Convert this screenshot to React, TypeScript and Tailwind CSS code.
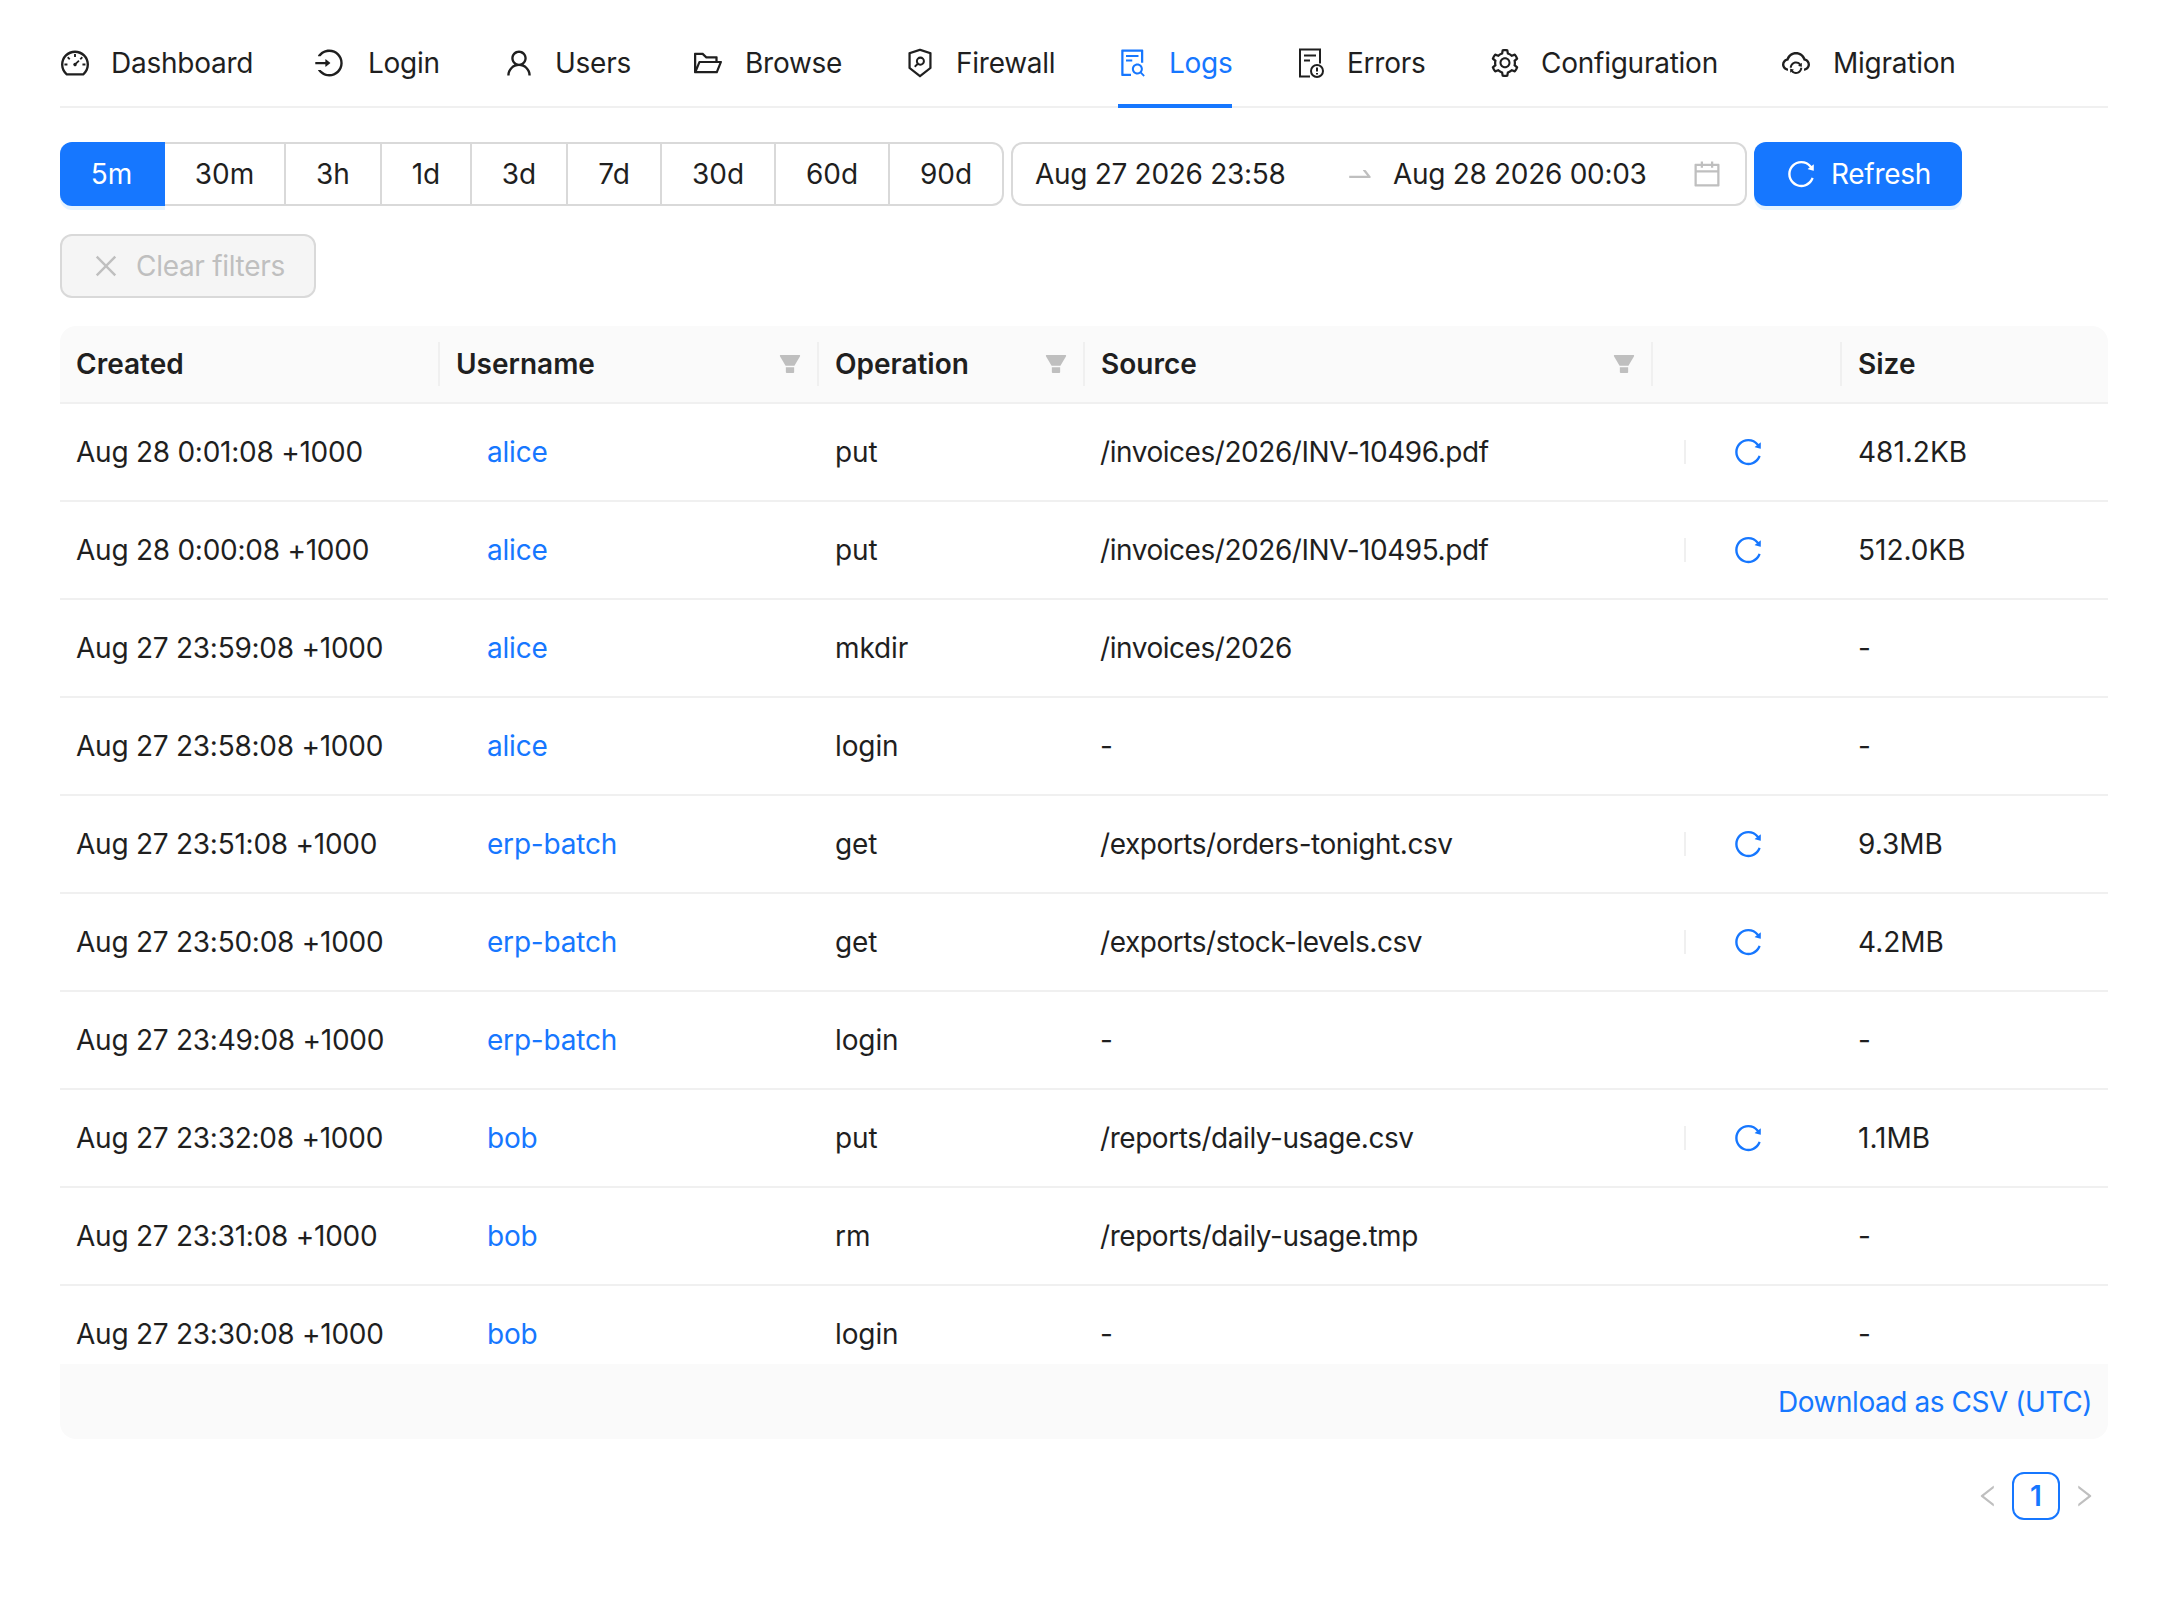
import {
  AiFillFilter,
  AiOutlineCalendar,
  AiOutlineClose,
  AiOutlineCloudSync,
  AiOutlineDashboard,
  AiOutlineFileSearch,
  AiOutlineFolderOpen,
  AiOutlineLeft,
  AiOutlineLogin,
  AiOutlineReload,
  AiOutlineRight,
  AiOutlineSecurityScan,
  AiOutlineSetting,
  AiOutlineSwapRight,
  AiOutlineUser,
} from "react-icons/ai";

const sans = "[font-family:Inter,'Liberation_Sans',sans-serif]";

const ErrorsIcon = () => (
  <svg width="32" height="32" viewBox="0 0 32 32" fill="none" stroke="currentColor" strokeWidth="2" className="shrink-0">
    <path d="M15 29.500H5V2.500h20v14" />
    <path d="M9 8.500h12M9 13.500h6" />
    <circle cx="22" cy="24" r="6" />
    <path d="M22 20.500v4M22 26v1.500" />
  </svg>
);

const tabs = [
  { label: "Dashboard", icon: <AiOutlineDashboard size={32} className="shrink-0" />, w: "w-[190px]", gap: "gap-[20px]" },
  { label: "Login", icon: <AiOutlineLogin size={32} className="shrink-0" />, w: "w-[126px]", gap: "gap-[23px]" },
  { label: "Users", icon: <AiOutlineUser size={32} className="shrink-0" />, w: "w-[125px]", gap: "gap-[20px]" },
  { label: "Browse", icon: <AiOutlineFolderOpen size={32} className="shrink-0" />, w: "w-[148px]", gap: "gap-[21px]" },
  { label: "Firewall", icon: <AiOutlineSecurityScan size={32} className="shrink-0" />, w: "w-[149px]", gap: "gap-[20px]" },
  { label: "Logs", icon: <AiOutlineFileSearch size={32} className="shrink-0" />, w: "w-[114px]", gap: "gap-[20px]", active: true },
  { label: "Errors", icon: <ErrorsIcon />, w: "w-[130px]", gap: "gap-[20px]" },
  { label: "Configuration", icon: <AiOutlineSetting size={32} className="shrink-0" />, w: "w-[227px]", gap: "gap-[20px]" },
  { label: "Migration", icon: <AiOutlineCloudSync size={32} className="shrink-0" />, w: "w-[174px]", gap: "gap-[21px]" },
];

const ranges = [
  { label: "5m", w: "w-[105px]", active: true },
  { label: "30m", w: "w-[121px]" },
  { label: "3h", w: "w-[96px]" },
  { label: "1d", w: "w-[90px]" },
  { label: "3d", w: "w-[96px]" },
  { label: "7d", w: "w-[94px]" },
  { label: "30d", w: "w-[114px]" },
  { label: "60d", w: "w-[114px]" },
  { label: "90d", w: "w-[114px]" },
];

const rows = [
  ["Aug 28 0:01:08 +1000", "alice", "put", "/invoices/2026/INV-10496.pdf", true, "481.2KB"],
  ["Aug 28 0:00:08 +1000", "alice", "put", "/invoices/2026/INV-10495.pdf", true, "512.0KB"],
  ["Aug 27 23:59:08 +1000", "alice", "mkdir", "/invoices/2026", false, "-"],
  ["Aug 27 23:58:08 +1000", "alice", "login", "-", false, "-"],
  ["Aug 27 23:51:08 +1000", "erp-batch", "get", "/exports/orders-tonight.csv", true, "9.3MB"],
  ["Aug 27 23:50:08 +1000", "erp-batch", "get", "/exports/stock-levels.csv", true, "4.2MB"],
  ["Aug 27 23:49:08 +1000", "erp-batch", "login", "-", false, "-"],
  ["Aug 27 23:32:08 +1000", "bob", "put", "/reports/daily-usage.csv", true, "1.1MB"],
  ["Aug 27 23:31:08 +1000", "bob", "rm", "/reports/daily-usage.tmp", false, "-"],
  ["Aug 27 23:30:08 +1000", "bob", "login", "-", false, "-"],
] as const;

export default function App() {
  return (
    <div className={`${sans} min-h-[1612px] bg-white px-[60px] text-[28px] leading-[40px] text-[#1f1f1f]`}>
      {/* top tabs */}
      <div className="flex h-[108px] gap-[64px] border-b-2 border-[#f0f0f0]">
        {tabs.map((t) => (
          <div
            key={t.label}
            className={`flex h-[108px] flex-none items-center whitespace-nowrap pt-[22px] tracking-[-0.25px] ${t.gap} ${t.w} ${
              t.active ? "border-b-4 border-[#1677ff] text-[#1677ff]" : "pb-[4px]"
            }`}
          >
            <span className="-ml-px">{t.icon}</span>
            <span>{t.label}</span>
          </div>
        ))}
      </div>

      {/* range picker row */}
      <div className="mt-[34px] flex gap-[7px]">
        <div className="flex">
          {ranges.map((r, i) => (
            <div
              key={r.label}
              className={`flex h-16 items-center justify-center border-y-2 border-r-2 ${r.w} ${
                r.active
                  ? "rounded-l-xl border-[#1677ff] bg-[#1677ff] text-white shadow-[0_4px_0_rgba(5,145,255,0.1)]"
                  : "border-[#d9d9d9]"
              } ${i === ranges.length - 1 ? "rounded-r-xl" : ""}`}
            >
              {r.label}
            </div>
          ))}
        </div>
        <div className="flex h-16 w-[736px] items-center rounded-xl border-2 border-[#d9d9d9] px-[22px] tracking-[-0.3px]">
          <span className="w-[310px]">Aug 27 2026 23:58</span>
          <span className="w-[48px] text-[#bfbfbf]">
            <AiOutlineSwapRight size={30} />
          </span>
          <span className="flex-1">Aug 28 2026 00:03</span>
          <AiOutlineCalendar size={32} className="text-[#bfbfbf]" />
        </div>
        <div className="flex h-16 w-[208px] items-center justify-center gap-[14px] rounded-xl bg-[#1677ff] tracking-[-0.3px] text-white shadow-[0_4px_0_rgba(5,145,255,0.1)]">
          <AiOutlineReload size={32} />
          <span>Refresh</span>
        </div>
      </div>

      {/* clear filters */}
      <div className="mt-7 flex h-16 w-[256px] items-center justify-center gap-[15px] rounded-xl border-2 border-[#d9d9d9] bg-[#f5f5f5] tracking-[-0.3px] text-[#bfbfbf]">
        <AiOutlineClose size={30} />
        <span>Clear filters</span>
      </div>

      {/* table */}
      <div className="mt-7 w-[2048px]">
        <div className="flex h-[78px] items-center rounded-t-2xl border-b-2 border-[#f0f0f0] bg-[#fafafa] font-semibold">
          <div className="w-[378px] pl-4">Created</div>
          <div className="flex h-[44px] w-[379px] items-center justify-between border-l-2 border-[#f0f0f0] pl-4 pr-[14px]">
            <span>Username</span>
            <AiFillFilter size={26} className="text-[#bfbfbf]" />
          </div>
          <div className="flex h-[44px] w-[266px] items-center justify-between border-l-2 border-[#f0f0f0] pl-4 pr-[14px]">
            <span>Operation</span>
            <AiFillFilter size={26} className="text-[#bfbfbf]" />
          </div>
          <div className="flex h-[44px] w-[568px] items-center justify-between border-l-2 border-[#f0f0f0] pl-4 pr-[14px]">
            <span>Source</span>
            <AiFillFilter size={26} className="text-[#bfbfbf]" />
          </div>
          <div className="h-[44px] w-[189px] border-l-2 border-[#f0f0f0]" />
          <div className="flex h-[44px] flex-1 items-center border-l-2 border-[#f0f0f0] px-4">Size</div>
        </div>

        {rows.map((r, i) => (
          <div
            key={r[0]}
            className={`flex ${
              i === rows.length - 1 ? "h-[78px] items-start pt-[28px]" : "h-[98px] items-center border-b-2 border-[#f0f0f0]"
            }`}
          >
            <div className="w-[378px] pl-4 tracking-[-0.25px]">{r[0]}</div>
            <div className="w-[381px] pl-[49px] tracking-[-0.2px] text-[#1677ff]">{r[1]}</div>
            <div className="w-[265px] pl-4 tracking-[-0.1px]">{r[2]}</div>
            <div className="w-[600px] pl-4 tracking-[-0.45px]">{r[3]}</div>
            <div className="flex w-[158px] items-center">
              {r[4] && (
                <>
                  <div className="h-6 w-0.5 bg-[#f0f0f0]" />
                  <div className="ml-[46px] text-[#1677ff]">
                    <AiOutlineReload size={32} />
                  </div>
                </>
              )}
            </div>
            <div className="flex-1 pl-4">{r[5]}</div>
          </div>
        ))}

        <div className="flex h-[75px] items-center justify-end rounded-b-2xl bg-[#fafafa] px-4 tracking-[-0.45px] text-[#1677ff]">
          Download as CSV (UTC)
        </div>
      </div>

      {/* pagination */}
      <div className="mt-[33px] flex w-[2048px] items-center justify-end gap-[10px] pr-[10px]">
        <AiOutlineLeft size={28} className="text-[#bfbfbf]" />
        <div className="flex h-12 w-12 items-center justify-center rounded-xl border-2 border-[#1677ff] font-semibold text-[#1677ff]">
          1
        </div>
        <AiOutlineRight size={28} className="text-[#bfbfbf]" />
      </div>
    </div>
  );
}
